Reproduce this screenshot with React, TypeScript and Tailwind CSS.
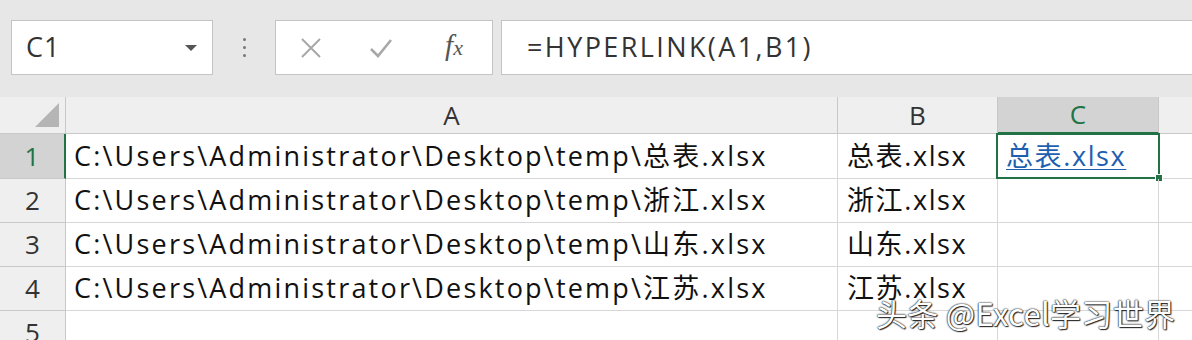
import React from "react";

const font = { fontFamily: '"Open Sans", "Noto Sans CJK SC", sans-serif' };

const rows = [
  { n: "1", a: "C:\\Users\\Administrator\\Desktop\\temp\\总表.xlsx", b: "总表.xlsx" },
  { n: "2", a: "C:\\Users\\Administrator\\Desktop\\temp\\浙江.xlsx", b: "浙江.xlsx" },
  { n: "3", a: "C:\\Users\\Administrator\\Desktop\\temp\\山东.xlsx", b: "山东.xlsx" },
  { n: "4", a: "C:\\Users\\Administrator\\Desktop\\temp\\江苏.xlsx", b: "江苏.xlsx" },
];

function Toolbar() {
  return (
    <div className="flex h-[97px] shrink-0 items-start bg-[#e7e7e7] pt-[20px] pl-[11px]">
      <div className="flex h-[55px] w-[202px] items-center justify-between border border-[#c4c4c4] bg-white pl-[14px] pr-[14px]">
        <span className="text-[27px] tracking-[1px] text-[#333]">C1</span>
        <svg width="14" height="8" viewBox="0 0 14 8">
          <path d="M1 1h12L7 7z" fill="#555" />
        </svg>
      </div>
      <div className="flex h-[55px] w-[62px] flex-col items-center justify-center gap-[5px]">
        <div className="h-[3px] w-[3px] rounded-full bg-[#777]" />
        <div className="h-[3px] w-[3px] rounded-full bg-[#777]" />
        <div className="h-[3px] w-[3px] rounded-full bg-[#777]" />
      </div>
      <div className="flex h-[55px] w-[218px] items-center border border-[#c4c4c4] bg-white">
        <div className="flex w-[70px] justify-center">
          <svg width="22" height="20" viewBox="0 0 22 20">
            <path d="M2 1L20 19M20 1L2 19" stroke="#a8a8a8" strokeWidth="2" />
          </svg>
        </div>
        <div className="flex w-[70px] justify-center">
          <svg width="24" height="20" viewBox="0 0 24 20">
            <path d="M2 11L9 18L22 2" stroke="#a8a8a8" strokeWidth="2.6" fill="none" />
          </svg>
        </div>
        <div className="flex w-[76px] justify-center pb-[4px]">
          <span
            className="text-[29px] italic leading-none text-[#555]"
            style={{ fontFamily: '"Liberation Serif", serif' }}
          >
            f<span className="text-[22px]">x</span>
          </span>
        </div>
      </div>
      <div className="ml-[8px] flex h-[55px] flex-1 items-center border-y border-l border-[#c4c4c4] bg-white pl-[25px]">
        <span className="text-[27px] tracking-[2.4px] text-[#333]">=HYPERLINK(A1,B1)</span>
      </div>
    </div>
  );
}

function Grid() {
  const line = "border-[#d7d7d7]";
  return (
    <div className="relative grid h-full grid-cols-[66px_772px_160px_161px_1fr] grid-rows-[37px_45px_44px_44px_44px_1fr] bg-white">
      <div className="flex items-end justify-end border-r border-b border-[#c8c8c8] bg-[#efefef] pr-[6px] pb-[6px]">
        <svg width="24" height="24" viewBox="0 0 24 24">
          <path d="M24 0V24H0z" fill="#b5b5b5" />
        </svg>
      </div>
      <div className="flex items-center justify-center border-r border-b border-[#c8c8c8] bg-[#efefef] text-[26px] text-[#333]">A</div>
      <div className="flex items-center justify-center border-r border-b border-[#c8c8c8] bg-[#efefef] text-[26px] text-[#333]">B</div>
      <div className="flex items-center justify-center border-r border-b-2 border-r-[#c8c8c8] border-b-[#217346] bg-[#d3d3d3] text-[26px] text-[#217346]">C</div>
      <div className="border-b border-[#c8c8c8] bg-[#efefef]" />

      {rows.map((r, i) => (
        <React.Fragment key={r.n}>
          <div
            className={`flex items-center justify-center border-b border-[#c8c8c8] text-[26px] ${
              i === 0
                ? "border-r-2 border-r-[#217346] bg-[#d3d3d3] text-[#217346]"
                : "border-r border-r-[#c8c8c8] bg-[#efefef] text-[#333]"
            }`}
          >
            {r.n}
          </div>
          <div className={`flex items-center whitespace-nowrap border-r border-b ${line} pl-[8px] text-[27px] tracking-[2.2px] text-[#111]`}>{r.a}</div>
          <div className={`flex items-center whitespace-nowrap border-r border-b ${line} pl-[9px] text-[27px] tracking-[1.6px] text-[#111]`}>{r.b}</div>
          <div className={`relative flex items-center border-r border-b ${line} pl-[8px] text-[27px] tracking-[1.6px]`}>
            {i === 0 && (
              <>
                <span className="text-[#1f5fb0] underline decoration-1 underline-offset-[3px]">总表.xlsx</span>
                <div className="absolute -top-[1px] -left-[2px] -right-[2px] -bottom-[1px] border-2 border-[#217346]" />
                <div className="absolute -right-[5px] -bottom-[4px] h-[8px] w-[8px] border border-white bg-[#217346]" />
              </>
            )}
          </div>
          <div className={`border-b ${line}`} />
        </React.Fragment>
      ))}

      <div className="flex items-start justify-center border-r border-[#c8c8c8] bg-[#efefef] pt-[2px] text-[26px] text-[#333]">5</div>
      <div className={`border-r ${line}`} />
      <div className={`border-r ${line}`} />
      <div className={`border-r ${line}`} />
      <div />

      <div
        className="absolute left-[876px] top-[200px] whitespace-nowrap text-[31px] leading-none tracking-[0.3px] text-white [text-shadow:0_0_2px_#111,0_0_1px_#111,1px_1px_1px_#333]"
        style={{ fontFamily: '"Noto Sans CJK SC", sans-serif' }}
      >
        头条 @Excel学习世界
      </div>
    </div>
  );
}

export default function App() {
  return (
    <div className="flex h-[340px] w-[1192px] flex-col overflow-hidden bg-white" style={font}>
      <Toolbar />
      <div className="min-h-0 flex-1">
        <Grid />
      </div>
    </div>
  );
}
